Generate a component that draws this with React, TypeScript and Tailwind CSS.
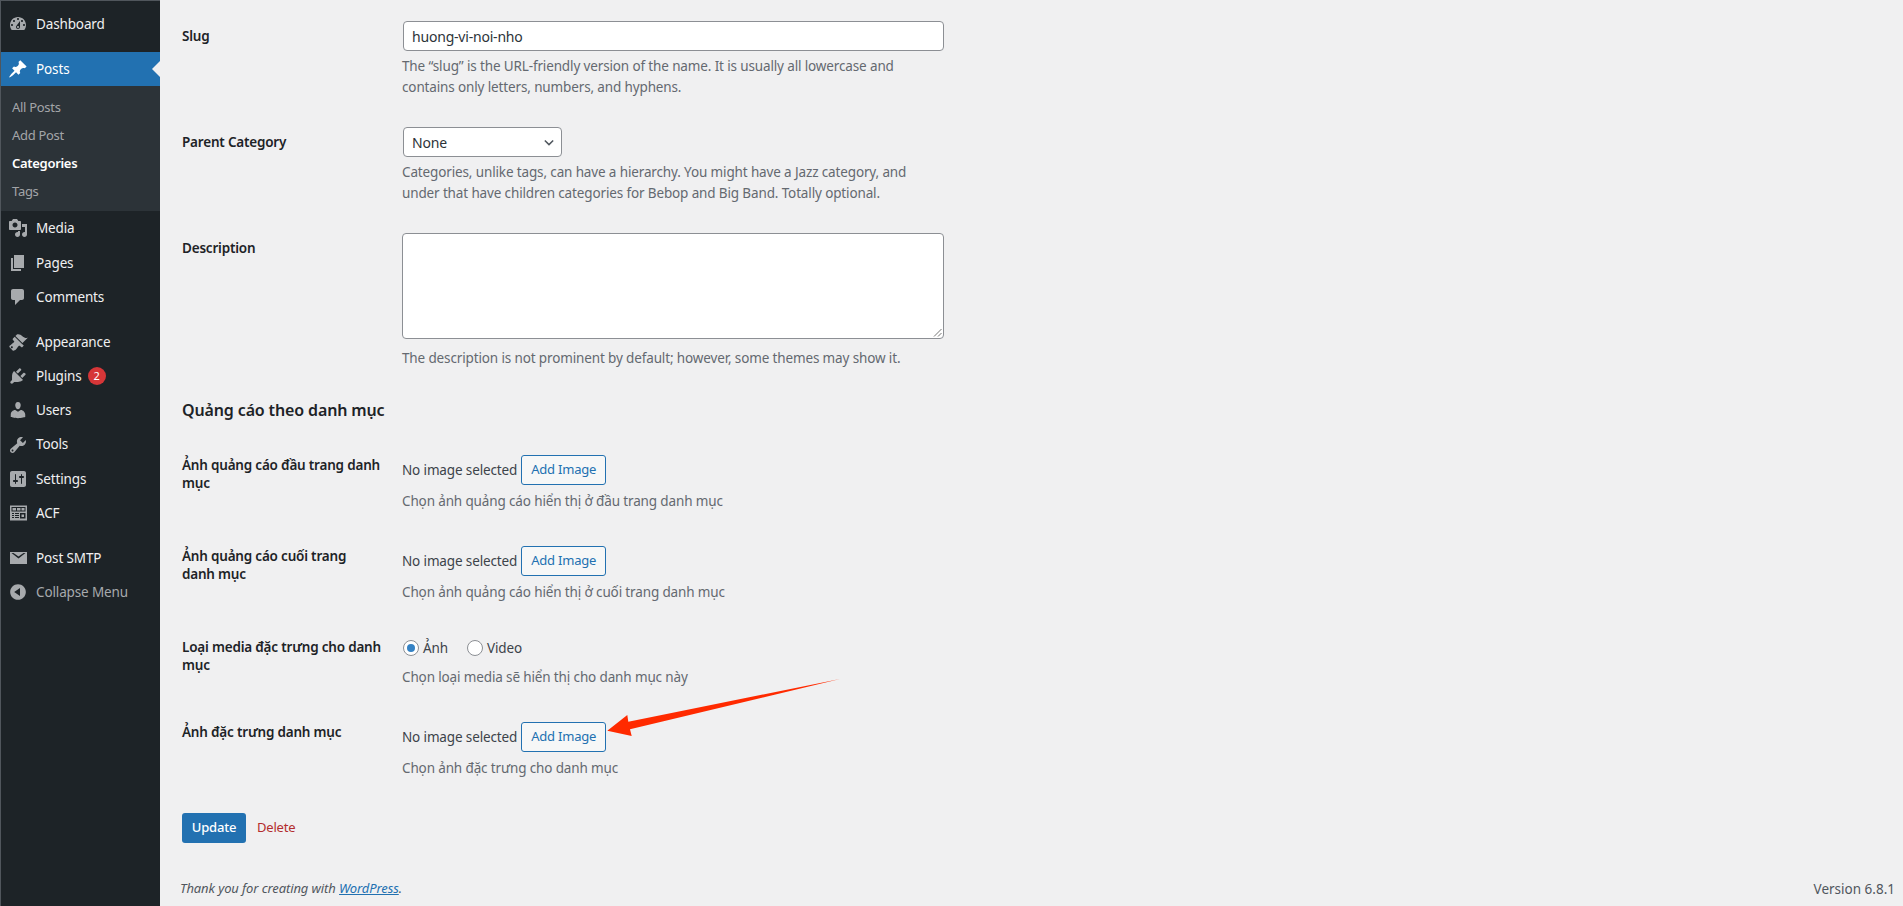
import React from "react";

const Icon = ({ d, even }: { d: string; even?: boolean }) => (
  <svg viewBox="0 0 20 20" className="w-5 h-5 fill-[#a7aaad]">
    <path d={d} fillRule={even ? "evenodd" : "nonzero"} />
  </svg>
);

const P = {
  dash: "M3.76 16h12.48c1.1-1.37 1.76-3.11 1.76-5 0-4.42-3.58-8-8-8s-8 3.58-8 8c0 1.89.66 3.63 1.76 5zM10 4c.55 0 1 .45 1 1s-.45 1-1 1-1-.45-1-1 .45-1 1-1zM6 6c.55 0 1 .45 1 1s-.45 1-1 1-1-.45-1-1 .45-1 1-1zm8 0c.55 0 1 .45 1 1s-.45 1-1 1-1-.45-1-1 .45-1 1-1zm-5.37 5.55L12 7v6c0 1.1-.9 2-2 2s-2-.9-2-2c0-.57.24-1.08.63-1.45zM4 10c.55 0 1 .45 1 1s-.45 1-1 1-1-.45-1-1 .45-1 1-1zm12 0c.55 0 1 .45 1 1s-.45 1-1 1-1-.45-1-1 .45-1 1-1zm-5 3c0-.55-.45-1-1-1s-1 .45-1 1 .45 1 1 1 1-.45 1-1z",
  post: "M10.44 3.02l1.82-1.82 6.36 6.35-1.83 1.82c-1.05-.68-2.48-.57-3.41.36l-.75.75c-.92.93-1.04 2.35-.35 3.41l-1.83 1.82-2.41-2.41-2.8 2.79c-.42.42-3.38 2.71-3.8 2.29s1.86-3.39 2.28-3.81l2.79-2.79L4.1 9.36l1.83-1.82c1.05.69 2.48.57 3.4-.36l.75-.75c.93-.92 1.05-2.35.36-3.41z",
  media: "M13 11V4c0-.55-.45-1-1-1h-1.67L9 1H5L3.67 3H2c-.55 0-1 .45-1 1v7c0 .55.45 1 1 1h10c.55 0 1-.45 1-1zM7 4.5c1.38 0 2.5 1.12 2.5 2.5S8.38 9.5 7 9.5 4.5 8.38 4.5 7 5.62 4.5 7 4.5zM14 6h5v10.5c0 1.38-1.12 2.5-2.5 2.5S14 17.88 14 16.5s1.12-2.5 2.5-2.5c.17 0 .34.02.5.05V9h-3V6zm-4 8.05V13h2v3.5c0 1.38-1.12 2.5-2.5 2.5S7 17.88 7 16.5 8.12 14 9.5 14c.17 0 .34.02.5.05z",
  page: "M6 15V2h10v13H6zm-1 1h8v2H3V5h2v11z",
  comments: "M5 2h9c1.1 0 2 .9 2 2v7c0 1.1-.9 2-2 2h-2l-5 5v-5H5c-1.1 0-2-.9-2-2V4c0-1.1.9-2 2-2z",
  appearance: "M14.48 11.06L7.41 3.99l1.5-1.5c.5-.56 2.3-.47 3.51.32 1.21.8 1.43 1.28 2.91 2.1 1.18.64 2.45 1.26 4.45.85zm-.71.71L6.7 4.7 4.93 6.47c-.39.39-.39 1.02 0 1.41l1.06 1.06c.39.39.39 1.03 0 1.42-.6.6-1.43 1.11-2.21 1.69-.35.26-.7.53-1.01.84C1.43 13.23.99 14.66 1.6 15.3l3.1 3.1c.63.62 2.07.18 3.41-1.17.31-.31.58-.66.84-1.01.58-.78 1.09-1.61 1.69-2.21.39-.39 1.03-.39 1.42 0l1.06 1.06c.39.39 1.02.39 1.41 0l1.24-1.47zm-9.19 4.24c-.41.42-1.07.42-1.49 0-.41-.41-.41-1.07 0-1.48.42-.42 1.08-.42 1.49 0 .41.41.41 1.07 0 1.48z",
  plugins: "M13.11 4.36L9.87 7.6 8 5.73l3.24-3.24c.35-.34 1.05-.2 1.56.32.52.51.66 1.21.31 1.55zm-8 1.77l.91-1.12 9.01 9.01-1.19.84c-.71.71-2.63 1.16-3.82 1.16H6.14L4.9 17.26c-.59.59-1.54.59-2.12 0-.59-.58-.59-1.53 0-2.12l1.24-1.24v-3.88c0-1.13.4-3.19 1.09-3.89zm7.26 3.97l3.24-3.24c.34-.35 1.04-.21 1.55.31.52.51.66 1.21.31 1.55l-3.24 3.25z",
  users: "M10 9.25c-2.27 0-2.73-3.44-2.73-3.44C7 4.02 7.82 2 9.97 2c2.16 0 2.98 2.02 2.71 3.81 0 0-.41 3.44-2.68 3.44zm0 2.57L12.72 10c2.39 0 4.52 2.33 4.52 4.53v2.49s-3.65 1.13-7.24 1.13c-3.65 0-7.24-1.13-7.24-1.13v-2.49c0-2.25 1.94-4.48 4.47-4.48z",
  tools: "M16.68 9.77c-1.34 1.34-3.3 1.67-4.95.99l-5.41 6.52c-.99.99-2.59.99-3.58 0s-.99-2.59 0-3.57l6.52-5.42c-.68-1.65-.35-3.61.99-4.95 1.28-1.28 3.12-1.62 4.72-1.06l-2.89 2.89 2.82 2.82 2.86-2.87c.53 1.58.18 3.39-1.08 4.65zM3.81 16.21c.4.39 1.04.39 1.43 0 .4-.4.4-1.04 0-1.43-.39-.4-1.03-.4-1.43 0-.39.39-.39 1.03 0 1.43z",
  settings: "M18 16V4c0-1.1-.9-2-2-2H4c-1.1 0-2 .9-2 2v12c0 1.1.9 2 2 2h12c1.1 0 2-.9 2-2zM8 11h1c.55 0 1 .45 1 1s-.45 1-1 1H8v1.5c0 .28-.22.5-.5.5s-.5-.22-.5-.5V13H6c-.55 0-1-.45-1-1s.45-1 1-1h1V5.5c0-.28.22-.5.5-.5s.5.22.5.5V11zm5-2h-1c-.55 0-1-.45-1-1s.45-1 1-1h1V5.5c0-.28.22-.5.5-.5s.5.22.5.5V7h1c.55 0 1 .45 1 1s-.45 1-1 1h-1v5.5c0 .28-.22.5-.5.5s-.5-.22-.5-.5V9z",
  acf: "M2 2.500h17v15H2zM3.500 4h14v4.500h-14zM4.500 5h3.500v2.500h-3.500zM9 5h3.500v2.500H9zM13.500 5h3v2.500h-3zM4 10h2v1H4zM7 10h4v1H7zM4 12h2v1H4zM7 12h4v1H7zM4 14h2v1H4zM7 14h4v1H7zM12 10h5.500v5.500H12zM13.500 11.500h2.500v2.500h-2.500z",
  mail: "M2 4h17v12H2zM3.500 5L10.500 10.500 17.500 5h-2L10.500 8.500 5.500 5z",
  collapse: "M10 2.160c4.330 0 7.840 3.510 7.840 7.840s-3.510 7.840-7.840 7.840S2.160 14.330 2.160 10 5.710 2.160 10 2.160zm2 11.720V6.120L6.180 9.970z",
};

const Item = ({ icon, label, badge, even }: { icon: string; label: string; badge?: string; even?: boolean }) => (
  <div className="h-[34.2px] flex items-center text-[13.5px] text-[#f0f0f1]">
    <div className="w-[35px] pl-[7px] flex justify-start shrink-0"><Icon d={icon} even={even} /></div>
    <span>{label}</span>
    {badge && (
      <span className="ml-[6px] w-[18px] h-[18px] rounded-full bg-[#d63638] text-white text-[11px] flex items-center justify-center">{badge}</span>
    )}
  </div>
);

const Help = ({ children }: { children: React.ReactNode }) => (
  <p className="text-[13.5px] leading-[21px] text-[#646970]">{children}</p>
);

const Label = ({ children }: { children: React.ReactNode }) => (
  <div className="w-[220px] shrink-0 pr-[20px] text-[13.5px] leading-[18px] font-semibold tracking-[-0.2px] text-[#1d2327]">{children}</div>
);

const ImageRow = ({ label, help, mb }: { label: React.ReactNode; help: string; mb: string }) => (
  <div className={`flex ${mb}`}>
    <div className="pt-[1px]"><Label>{label}</Label></div>
    <div>
      <div className="flex items-center gap-[4px] h-[30px] text-[13.5px] text-[#3c434a]">
        <span>No image selected</span>
        <span className="w-[85px] h-[30px] flex items-center justify-center border border-[#2271b1] rounded-[3px] bg-[#f6f7f7] text-[#2271b1] text-[13px] tracking-[-0.2px]">Add Image</span>
      </div>
      <div className="mt-[6px]"><Help>{help}</Help></div>
    </div>
  </div>
);

export default function App() {
  return (
    <div className="w-[1903px] h-[906px] overflow-hidden flex bg-[#f0f0f1] font-['Noto_Sans','Open_Sans',sans-serif] tracking-[-0.135px]">
      <aside className="relative w-[160px] shrink-0 bg-[#1d2327] border-l border-t border-[#50565c] pt-[6px]">
        <Item icon={P.dash} label="Dashboard" />
        <div className="mt-[11px] h-[34px] bg-[#2271b1] flex items-center text-[13.5px] text-white relative">
          <div className="w-[35px] pl-[7px] shrink-0">
            <svg viewBox="0 0 20 20" className="w-5 h-5 fill-white"><path d={P.post} /></svg>
          </div>
          <span>Posts</span>
          <span className="absolute right-0 top-[9px] border-y-[8px] border-r-[8px] border-y-transparent border-r-[#f0f0f1]" />
        </div>
        <div className="bg-[#2c3338] pt-[7px] pb-[5px] pl-[11px] text-[13px] tracking-[-0.3px] text-[#c3c4c7]/80">
          <div className="h-[28.3px] flex items-center">All Posts</div>
          <div className="h-[28.3px] flex items-center">Add Post</div>
          <div className="h-[28.3px] flex items-center font-semibold text-white">Categories</div>
          <div className="h-[28.3px] flex items-center">Tags</div>
        </div>
        <Item icon={P.media} label="Media" />
        <Item icon={P.page} label="Pages" />
        <Item icon={P.comments} label="Comments" />
        <div className="h-[11px]" />
        <Item icon={P.appearance} label="Appearance" />
        <Item icon={P.plugins} label="Plugins" badge="2" />
        <Item icon={P.users} label="Users" />
        <Item icon={P.tools} label="Tools" />
        <Item icon={P.settings} label="Settings" />
        <Item icon={P.acf} label="ACF" even />
        <div className="h-[11px]" />
        <Item icon={P.mail} label="Post SMTP" even />
        <div className="h-[34px] flex items-center text-[13.5px] text-[#a7aaad]">
          <div className="w-[35px] pl-[7px] shrink-0"><Icon d={P.collapse} /></div>
          <span>Collapse Menu</span>
        </div>
      </aside>

      <main className="relative flex-1 pl-[22px] pt-[21px] flex flex-col">
        <div className="flex">
          <div className="pt-[6px]"><Label>Slug</Label></div>
          <div className="w-[542px]">
            <div className="ml-[1px] h-[30px] bg-white border border-[#8c8f94] rounded-[4px] pl-[8px] flex items-center text-[14px] tracking-[-0.2px] text-[#2c3338]">huong-vi-noi-nho</div>
            <div className="mt-[5px]"><Help>The “slug” is the URL-friendly version of the name. It is usually all lowercase and contains only letters, numbers, and hyphens.</Help></div>
          </div>
        </div>

        <div className="flex mt-[29px]">
          <div className="pt-[6px]"><Label>Parent Category</Label></div>
          <div className="w-[542px]">
            <div className="ml-[1px] w-[159px] h-[30px] bg-white border border-[#8c8f94] rounded-[4px] pl-[8px] pr-[7px] flex items-center justify-between text-[14px] tracking-[-0.2px] text-[#2c3338]">
              <span>None</span>
              <svg viewBox="0 0 12 8" className="w-[10px] h-[7px] stroke-[#50575e] fill-none" strokeWidth="1.800"><path d="M1 1.500l5 5 5-5" /></svg>
            </div>
            <div className="mt-[5px]"><Help>Categories, unlike tags, can have a hierarchy. You might have a Jazz category, and under that have children categories for Bebop and Big Band. Totally optional.</Help></div>
          </div>
        </div>

        <div className="flex mt-[29px]">
          <div className="pt-[6px]"><Label>Description</Label></div>
          <div className="w-[542px]">
            <div className="relative h-[106px] bg-white border border-[#8c8f94] rounded-[4px]">
              <svg viewBox="0 0 10 10" className="absolute right-[1px] bottom-[1px] w-[10px] h-[10px] stroke-[#777]" strokeWidth="1"><path d="M2 9.500L9.500 2M6 9.500L9.500 6" /></svg>
            </div>
            <div className="mt-[9px]"><Help>The description is not prominent by default; however, some themes may show it.</Help></div>
          </div>
        </div>

        <h2 className="mt-[29px] mb-[33px] text-[16px] leading-[24px] font-semibold text-[#1d2327]">Quảng cáo theo danh mục</h2>

        <ImageRow label="Ảnh quảng cáo đầu trang danh mục" help="Chọn ảnh quảng cáo hiển thị ở đầu trang danh mục" mb="mb-[34px]" />
        <ImageRow label="Ảnh quảng cáo cuối trang danh mục" help="Chọn ảnh quảng cáo hiển thị ở cuối trang danh mục" mb="mb-[34px]" />

        <div className="flex pt-[2px] mb-[34px]">
          <div className="-mt-[1px]"><Label>Loại media đặc trưng cho danh mục</Label></div>
          <div>
            <div className="flex items-center h-[18px] text-[13.5px] text-[#3c434a] pl-[1px]">
              <span className="w-4 h-4 rounded-full border border-[#8c8f94] bg-white flex items-center justify-center mr-[4px]"><span className="w-2 h-2 rounded-full bg-[#3582c4]" /></span>
              <span className="mr-[19px]">Ảnh</span>
              <span className="w-4 h-4 rounded-full border border-[#8c8f94] bg-white mr-[4px]" />
              <span>Video</span>
            </div>
            <div className="mt-[10px]"><Help>Chọn loại media sẽ hiển thị cho danh mục này</Help></div>
          </div>
        </div>

        <ImageRow label="Ảnh đặc trưng danh mục" help="Chọn ảnh đặc trưng cho danh mục" mb="mb-[34px]" />

        <div className="flex items-center h-[30px] tracking-[-0.2px]">
          <span className="w-[64px] h-[30px] bg-[#2271b1] rounded-[3px] text-white text-[13px] flex items-center justify-center font-medium">Update</span>
          <span className="ml-[11px] text-[13px] text-[#b32d2e]">Delete</span>
        </div>

        <div className="absolute left-[20px] right-[8px] top-[879px] flex justify-between text-[13px] text-[#50575e]">
          <span className="italic tracking-[-0.1px]">Thank you for creating with <span className="underline text-[#2271b1]">WordPress</span>.</span>
          <span className="text-[13.5px] tracking-[0px]">Version 6.8.1</span>
        </div>

        <svg viewBox="0 0 240 64" className="absolute left-[445px] top-[676px] w-[240px] h-[64px] fill-[#ff2a00]">
          <path d="M2.300 54.700 L22.300 39 L23.300 45.700 L235 3 L25 53.300 L26.700 60 Z" />
        </svg>
      </main>
    </div>
  );
}
